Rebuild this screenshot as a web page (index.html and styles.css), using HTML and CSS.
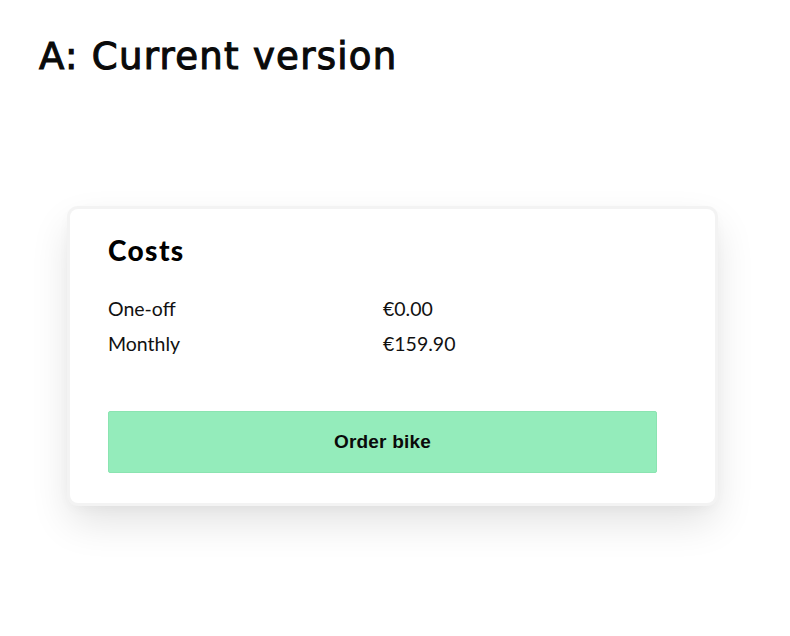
FILE: index.html
```html
<!DOCTYPE html>
<html lang="en">
<head>
<meta charset="utf-8">
<title>A: Current version</title>
<link rel="stylesheet" href="styles.css">
</head>
<body>
<main class="page">
  <h1 class="title">A: Current version</h1>
  <section class="card">
    <h2 class="card-title">Costs</h2>
    <dl class="costs">
      <div class="row"><dt>One-off</dt><dd>€0.00</dd></div>
      <div class="row"><dt>Monthly</dt><dd>€159.90</dd></div>
    </dl>
    <button class="order" type="button">Order bike</button>
  </section>
</main>
</body>
</html>
```
FILE: styles.css
```css
html, body {
  margin: 0;
  padding: 0;
  background: #ffffff;
}
body {
  width: 790px;
  height: 636px;
  overflow: hidden;
  font-family: "Lato", "Liberation Sans", sans-serif;
  color: #111;
}
.page {
  padding: 36px 0 0 39px;
}
.title {
  margin: 0;
  font-family: "DejaVu Sans", sans-serif;
  font-weight: 400;
  font-size: 37px;
  line-height: 42px;
  letter-spacing: 1.3px;
  -webkit-text-stroke: 1.1px #0a0a0a;
  color: #0a0a0a;
}
.card {
  margin: 131px 0 0 31px;
  width: 645px;
  height: 294px;
  box-sizing: border-box;
  padding: 24px 58px 0 38px;
  background: #fff;
  border-radius: 8px;
  box-shadow: 0 0 0 3px #f3f3f3, 0 18px 40px rgba(0, 0, 0, 0.12), 0 4px 14px rgba(0, 0, 0, 0.04);
  display: flex;
  flex-direction: column;
}
.card-title {
  margin: 0;
  font-family: "Lato", sans-serif;
  font-weight: 900;
  font-size: 28px;
  line-height: 34px;
  letter-spacing: 1.4px;
  color: #000;
}
.costs {
  margin: 30px 0 0;
  display: flex;
  flex-direction: column;
  gap: 11px;
}
.row {
  display: grid;
  grid-template-columns: 275px 1fr;
  font-size: 19.5px;
  line-height: 24px;
}
.row dt, .row dd {
  margin: 0;
}
.order {
  margin-top: 55px;
  height: 62px;
  width: 549px;
  background: #94ecbb;
  border: 1px solid #8be4b1;
  border-radius: 2px;
  font-family: "Liberation Sans", sans-serif;
  font-weight: 700;
  font-size: 19px;
  letter-spacing: 0.2px;
  color: #0a0a0a;
  padding: 0;
}
```
